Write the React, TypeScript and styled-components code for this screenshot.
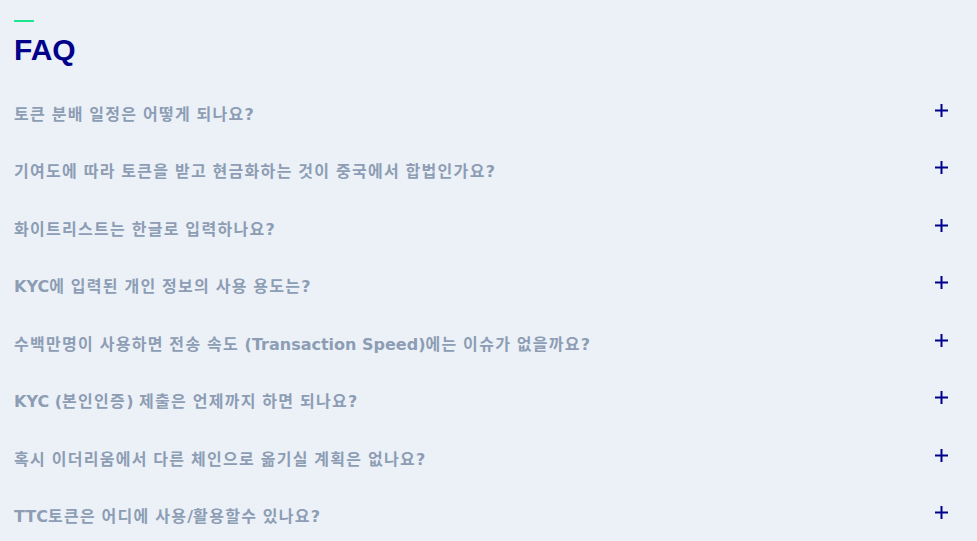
import React from "react";
import styled, { createGlobalStyle } from "styled-components";

const Global = createGlobalStyle`
  html, body { margin: 0; padding: 0; background: #ecf1f8; }
  body { font-family: "DejaVu Sans", "Noto Sans CJK KR", sans-serif; }
`;

const Page = styled.section`
  background: #ecf1f8;
  min-height: 541px;
  padding: 20px 29px 0 14px;
  box-sizing: border-box;
`;

const Accent = styled.div`
  width: 20px;
  height: 2px;
  background: #1de68f;
  margin-bottom: 10px;
`;

const Title = styled.h2`
  margin: 0 0 17px;
  font-family: "Liberation Sans", Arial, sans-serif;
  font-weight: 700;
  font-size: 30px;
  line-height: 36px;
  color: #00008b;
`;

const List = styled.ul`
  list-style: none;
  margin: 0;
  padding: 0;
`;

const Item = styled.li`
  height: 57.5px;
  display: flex;
  align-items: center;
  justify-content: space-between;
  cursor: pointer;
`;

const Question = styled.span`
  font-family: "DejaVu Sans", "Noto Sans CJK KR", sans-serif;
  font-weight: 700;
  font-size: 16px;
  line-height: 20px;
  color: #8d9db4;
  padding-top: 2px;
`;

const Hangul = styled.span`
  letter-spacing: 1.3px;
`;

const Plus = styled.svg`
  flex: none;
  width: 13px;
  height: 13px;
  margin-bottom: 7px;
  color: #00008b;
`;

const questions = [
  "토큰 분배 일정은 어떻게 되나요?",
  "기여도에 따라 토큰을 받고 현금화하는 것이 중국에서 합법인가요?",
  "화이트리스트는 한글로 입력하나요?",
  "KYC에 입력된 개인 정보의 사용 용도는?",
  "수백만명이 사용하면 전송 속도 (Transaction Speed)에는 이슈가 없을까요?",
  "KYC (본인인증) 제출은 언제까지 하면 되나요?",
  "혹시 이더리움에서 다른 체인으로 옮기실 계획은 없나요?",
  "TTC토큰은 어디에 사용/활용할수 있나요?",
];

const renderText = (text: string) =>
  text.split(/([\uAC00-\uD7A3]+)/).map((part, i) =>
    /[\uAC00-\uD7A3]/.test(part) ? <Hangul key={i}>{part}</Hangul> : part
  );

const PlusIcon = () => (
  <Plus viewBox="0 0 13 13" aria-hidden="true">
    <path d="M0 6.5H13M6.5 0V13" stroke="currentColor" strokeWidth="2" fill="none" />
  </Plus>
);

export default function App() {
  return (
    <>
      <Global />
      <Page>
        <Accent />
        <Title>FAQ</Title>
        <List>
          {questions.map((q) => (
            <Item key={q}>
              <Question>{renderText(q)}</Question>
              <PlusIcon />
            </Item>
          ))}
        </List>
      </Page>
    </>
  );
}
